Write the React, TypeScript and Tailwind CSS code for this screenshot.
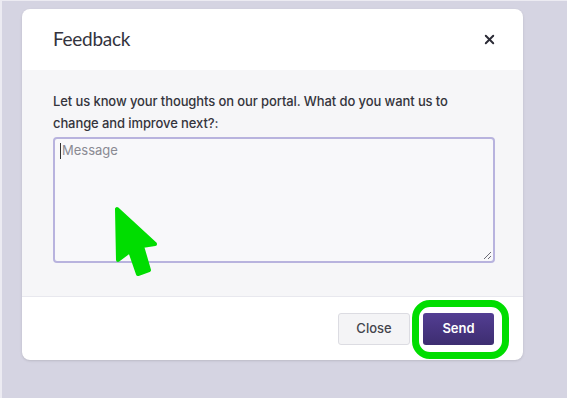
import { X } from 'lucide-react';

const Pointer = () => (
  <svg
    className="absolute left-[104px] top-[198px]"
    width="56"
    height="84"
    viewBox="0 0 56 84"
  >
    <polygon
      points="11,10 12,61 24,52 32,75 43,71 36,47 49,45"
      fill="#00dd00"
      stroke="#00dd00"
      strokeWidth="4"
      strokeLinejoin="round"
    />
  </svg>
);

const ResizeGrip = () => (
  <svg className="absolute right-[1px] bottom-[1px]" width="9" height="9" viewBox="0 0 9 9">
    <path d="M8 1 L1 8 M8 5 L5 8" stroke="#6b6b74" strokeWidth="1" />
  </svg>
);

export default function App() {
  return (
    <div
      className="relative w-[567px] h-[398px] overflow-hidden bg-[#d5d4e2] border-l-2 border-t border-[#ecebf2] pl-[20px] pt-[8px]"
      style={{ fontFamily: 'Inter, "Liberation Sans", sans-serif' }}
    >
      {/* Modal */}
      <div className="w-[501px] h-[351px] bg-white rounded-lg overflow-hidden flex flex-col shadow-sm">
        {/* Header */}
        <div className="h-[61px] shrink-0 flex items-center justify-between pl-[31px] pr-[26px]">
          <span
            className="text-[19px] text-[#33333d] tracking-[-0.3px]"
            style={{ fontFamily: 'Lato, "Noto Sans", sans-serif' }}
          >
            Feedback
          </span>
          <X size={15} strokeWidth={3} className="text-[#2b2b36]" />
        </div>

        {/* Body */}
        <div className="flex-1 bg-[#f6f6f8] px-[31px] pt-[20px]">
          <p className="text-[13px] leading-[22px] font-medium text-[#34343c] tracking-[-0.1px]">
            Let us know your thoughts on our portal. What do you want us to change and improve next?:
          </p>
          <div className="relative mt-[3px] w-[442px] h-[126px] rounded-[4px] border-2 border-[#b8b3de] bg-[#f8f8fa] px-[5px] pt-[2px]">
            <div className="flex items-center text-[13px] text-[#8a8a92]">
              <span className="w-px h-[16px] bg-[#333] mr-px" />
              Message
            </div>
            <ResizeGrip />
          </div>
        </div>

        {/* Footer */}
        <div className="h-[64px] shrink-0 border-t border-[#e8e8ee] flex items-center justify-end gap-[13px] pr-[29px]">
          <button className="w-[72px] h-[32px] rounded-[3px] border border-[#dcdce2] bg-[#f4f4f6] text-[13px] font-medium text-[#44444c]">
            Close
          </button>
          <div className="relative">
            <div className="absolute left-[-11px] right-[-15px] top-[-13px] bottom-[-14px] rounded-[18px] border-[7px] border-[#00dd00]" />
            <button className="relative w-[71px] h-[32px] rounded-[3px] bg-gradient-to-b from-[#533e93] to-[#3d2d70] text-[13px] font-semibold text-white">
              Send
            </button>
          </div>
        </div>
      </div>

      <Pointer />
    </div>
  );
}
